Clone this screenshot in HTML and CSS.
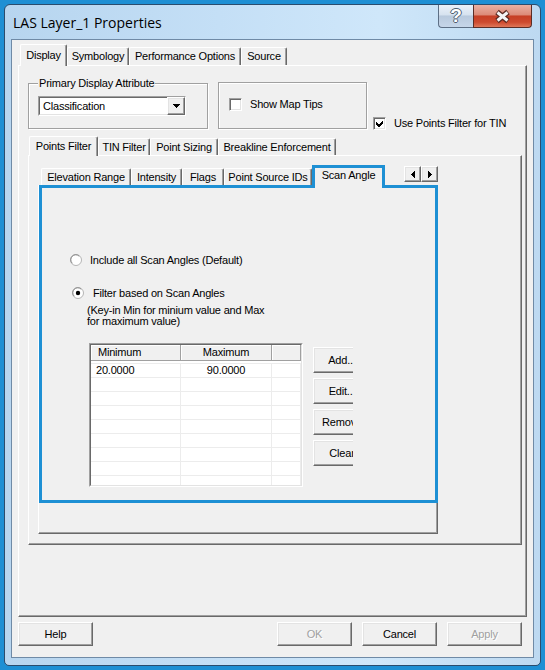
FILE: index.html
```html
<!DOCTYPE html>
<html>
<head>
<meta charset="utf-8">
<title>LAS Layer_1 Properties</title>
<link rel="stylesheet" href="styles.css">
</head>
<body>
<div class="window">
  <div class="titlebar">
    <div class="title">LAS Layer_1 Properties</div>
    <div class="caption">
      <div class="cap-help">?</div>
      <div class="cap-close">
        <svg width="17" height="15" viewBox="0 0 17 15">
          <path d="M3 3 L14 12 M14 3 L3 12" stroke="#5a2a22" stroke-width="5.5" fill="none"/>
          <path d="M3.5 3.5 L13.5 11.5 M13.5 3.5 L3.5 11.5" stroke="#f4f4f4" stroke-width="3" fill="none"/>
        </svg>
      </div>
    </div>
  </div>
  <div class="client">
    <div class="tabs main-tabs">
      <div class="tab sel w-display">Display</div>
      <div class="tab w-symb">Symbology</div>
      <div class="tab w-perf">Performance Options</div>
      <div class="tab w-src">Source</div>
    </div>
    <div class="panel main-panel">
      <div class="top-row">
        <div class="group group-attr">
          <div class="group-label">Primary Display Attribute</div>
          <div class="combo">
            <span class="combo-text">Classification</span>
            <span class="combo-btn">
              <svg width="7" height="4" viewBox="0 0 7 4" shape-rendering="crispEdges"><polygon points="0,0 7,0 3.5,4" fill="#000"/></svg>
            </span>
          </div>
        </div>
        <div class="group group-tips">
          <div class="check"><span class="box"></span>Show Map Tips</div>
        </div>
        <div class="check tin">
          <span class="box">
            <svg width="7" height="7" viewBox="0 0 7 7" shape-rendering="crispEdges"><path d="M0 2 L0 5 L2 7 L3 7 L7 3 L7 0 L2.5 4.5 Z" fill="#000"/></svg>
          </span>Use Points Filter for TIN
        </div>
      </div>

      <div class="pf">
        <div class="tabs pf-tabs">
          <div class="tab sel w-pf">Points Filter</div>
          <div class="tab w-tin">TIN Filter</div>
          <div class="tab w-ps">Point Sizing</div>
          <div class="tab w-be">Breakline Enforcement</div>
        </div>
        <div class="panel pf-panel">
          <div class="scan">
            <div class="tabs scan-tabs">
              <div class="tab w-er">Elevation Range</div>
              <div class="tab w-int">Intensity</div>
              <div class="tab w-fl">Flags</div>
              <div class="tab w-psi">Point Source IDs</div>
              <div class="tab scan-sel">Scan Angle</div>
              <div class="arrows">
                <div class="btn arr">
                  <svg width="4" height="7" viewBox="0 0 4 7" shape-rendering="crispEdges"><polygon points="4,0 4,7 0,3.5" fill="#000"/></svg>
                </div>
                <div class="btn arr">
                  <svg width="4" height="7" viewBox="0 0 4 7" shape-rendering="crispEdges"><polygon points="0,0 0,7 4,3.5" fill="#000"/></svg>
                </div>
              </div>
            </div>
            <div class="panel scan-panel">
              <div class="hl">
                <div class="radio-row">
                  <svg class="radio" width="12" height="12" viewBox="0 0 12 12">
                    <circle cx="6" cy="6" r="5.5" fill="#fff" stroke="#b4b4b4"/>
                    <path d="M2.2 9.2 A4.6 4.6 0 0 1 9.2 2.2" stroke="#8a8a8a" fill="none"/>
                  </svg>
                  <span>Include all Scan Angles (Default)</span>
                </div>
                <div class="radio-row r2">
                  <svg class="radio" width="12" height="12" viewBox="0 0 12 12">
                    <circle cx="6" cy="6" r="5.5" fill="#fff" stroke="#b4b4b4"/>
                    <path d="M2.2 9.2 A4.6 4.6 0 0 1 9.2 2.2" stroke="#8a8a8a" fill="none"/>
                    <circle cx="6" cy="6" r="2.2" fill="#000"/>
                  </svg>
                  <span>Filter based on Scan Angles</span>
                </div>
                <div class="note">(Key-in Min for minium value and Max<br>for maximum value)</div>
                <div class="list-row">
                  <div class="list">
                    <div class="list-inner">
                      <div class="lv-head">
                        <div class="lv-h c1">Minimum</div>
                        <div class="lv-h c2 center">Maximum</div>
                        <div class="lv-h c3"></div>
                      </div>
                      <div class="lv-body">
                        <div class="lv-r"><div class="lv-c c1">20.0000</div><div class="lv-c c2 center">90.0000</div><div class="lv-c c3"></div></div>
                        <div class="lv-r"><div class="lv-c c1"></div><div class="lv-c c2"></div><div class="lv-c c3"></div></div>
                        <div class="lv-r"><div class="lv-c c1"></div><div class="lv-c c2"></div><div class="lv-c c3"></div></div>
                        <div class="lv-r"><div class="lv-c c1"></div><div class="lv-c c2"></div><div class="lv-c c3"></div></div>
                        <div class="lv-r"><div class="lv-c c1"></div><div class="lv-c c2"></div><div class="lv-c c3"></div></div>
                        <div class="lv-r"><div class="lv-c c1"></div><div class="lv-c c2"></div><div class="lv-c c3"></div></div>
                        <div class="lv-r"><div class="lv-c c1"></div><div class="lv-c c2"></div><div class="lv-c c3"></div></div>
                        <div class="lv-r"><div class="lv-c c1"></div><div class="lv-c c2"></div><div class="lv-c c3"></div></div>
                        <div class="lv-r"><div class="lv-c c1"></div><div class="lv-c c2"></div><div class="lv-c c3"></div></div>
                      </div>
                    </div>
                  </div>
                  <div class="side">
                    <div class="btn sbtn">Add...</div>
                    <div class="btn sbtn">Edit...</div>
                    <div class="btn sbtn">Remove</div>
                    <div class="btn sbtn">Clear</div>
                  </div>
                </div>
              </div>
            </div>
          </div>
        </div>
      </div>
    </div>
    <div class="footer">
      <div class="btn fbtn">Help</div>
      <div class="btn fbtn ok disabled">OK</div>
      <div class="btn fbtn gap">Cancel</div>
      <div class="btn fbtn gap disabled">Apply</div>
    </div>
  </div>
</div>
</body>
</html>
```
FILE: styles.css
```css
* { box-sizing: border-box; }
html, body { margin: 0; padding: 0; }
body {
  width: 545px;
  height: 670px;
  overflow: hidden;
  padding: 4px 0 0 4px;
  background: #1e8fd4;
  font-family: "Liberation Sans", Arial, sans-serif;
  font-size: 11px;
  letter-spacing: -0.2px;
  color: #000;
}

/* window frame */
.window {
  width: 537px;
  height: 662px;
  border: 1px solid #2b4c6d;
  border-radius: 6px 6px 5px 5px;
  background: linear-gradient(to right, #b7d5ef 0%, #c4dff6 40%, #cfe7fa 70%, #bdd9f1 100%);
  padding: 0 6px 7px 6px;
  display: flex;
  flex-direction: column;
}
.titlebar {
  height: 34px;
  display: flex;
  align-items: flex-start;
  flex: none;
}
.title {
  font-family: "Open Sans", "Noto Sans", sans-serif;
  font-size: 14px;
  letter-spacing: 0;
  line-height: 18px;
  margin-top: 9px;
  padding-left: 2px;
  color: #000;
}
.caption {
  margin-left: auto;
  margin-right: 2px;
  display: flex;
  height: 23px;
}
.cap-help {
  width: 35px;
  height: 23px;
  border: 1px solid #5d6f85;
  border-top: none;
  border-right: none;
  border-radius: 0 0 0 4px;
  background: linear-gradient(#eaf1f9 0%, #d6e2ef 45%, #b8c9dd 50%, #c6d6e9 100%);
  color: #fff;
  font-family: "Liberation Sans", Arial, sans-serif;
  font-weight: bold;
  font-size: 19px;
  line-height: 22px;
  letter-spacing: 0;
  text-align: center;
  text-shadow: 1px 0 0 #4e5e70, -1px 0 0 #4e5e70, 0 1px 0 #4e5e70, 0 -1px 0 #4e5e70;
}
.cap-close {
  width: 59px;
  height: 23px;
  border: 1px solid #5b2d26;
  border-top: none;
  border-radius: 0 0 4px 0;
  background: linear-gradient(#eab0a2 0%, #dc8b78 45%, #c63f25 50%, #cd4a2f 78%, #df7658 100%);
  display: flex;
  align-items: center;
  justify-content: center;
}

/* client */
.client {
  height: 619px;
  flex: none;
  border: 1px solid #6f8aa6;
  background: #f0f0f0;
  padding: 4px 6px 0 6px;
}

/* tabs */
.tabs {
  display: flex;
  align-items: flex-end;
}
.tab {
  background: #f0f0f0;
  border-left: 1px solid #fff;
  border-top: 1px solid #fff;
  border-right: 1px solid #696969;
  box-shadow: inset -1px 0 0 #a0a0a0;
  border-radius: 2px 2px 0 0;
  text-align: center;
  white-space: nowrap;
  flex: none;
}
.tab.sel {
  position: relative;
  z-index: 1;
}

.main-tabs { height: 21px; padding-left: 2px; }
.main-tabs .tab { height: 18px; line-height: 17px; }
.main-tabs .tab.sel { height: 22px; margin-bottom: -1px; line-height: 20px; }
.w-display { width: 47px; }
.w-symb { width: 62px; }
.w-perf { width: 112px; }
.w-src { width: 46px; }

.panel {
  background: #f0f0f0;
  border-left: 1px solid #fff;
  border-top: 1px solid #fff;
  border-right: 1px solid #696969;
  border-bottom: 1px solid #696969;
  box-shadow: inset -1px -1px 0 #a0a0a0;
}
.main-panel {
  height: 552px;
  padding: 16px 0 0 9px;
}

/* top row */
.top-row {
  display: flex;
  align-items: flex-end;
}
.group {
  border: 1px solid #a0a0a0;
  box-shadow: inset 1px 1px 0 #fff, 1px 1px 0 #fff;
  flex: none;
}
.group-attr {
  width: 180px;
  padding: 0 0 12px 9px;
}
.group-label {
  margin-top: -7px;
  width: max-content;
  padding: 0 1px;
  line-height: 12px;
  background: #f0f0f0;
}
.group-tips {
  width: 149px;
  margin-left: 10px;
  padding: 15px 0 17px 10px;
}
.combo {
  margin-top: 7px;
  width: 148px;
  height: 20px;
  background: #fff;
  border: 1px solid;
  border-color: #a0a0a0 #fff #fff #a0a0a0;
  display: flex;
  align-items: stretch;
}
.combo-text {
  flex: 1;
  border: 1px solid;
  border-color: #696969 transparent transparent #696969;
  border-right: none;
  border-bottom: 1px solid #e3e3e3;
  padding-left: 3px;
  line-height: 16px;
}
.combo-btn {
  width: 18px;
  background: #f0f0f0;
  border: 1px solid;
  border-color: #fff #696969 #696969 #fff;
  box-shadow: inset -1px -1px 0 #a0a0a0, inset 1px 1px 0 #e3e3e3;
  display: flex;
  align-items: center;
  justify-content: center;
}

.check {
  display: flex;
  align-items: center;
  height: 13px;
  line-height: 13px;
  white-space: nowrap;
}
.box {
  width: 13px;
  height: 13px;
  flex: none;
  margin-right: 8px;
  background: #fff;
  border: 1px solid;
  border-color: #a0a0a0 #fff #fff #a0a0a0;
  box-shadow: inset 1px 1px 0 #696969, inset -1px -1px 0 #e3e3e3;
  display: flex;
  align-items: center;
  justify-content: center;
}
.tin {
  margin-left: 6px;
  margin-bottom: -1px;
}

/* points filter tabs */
.pf {
  margin-top: 7px;
  width: 494px;
}
.pf-tabs { height: 19px; padding-left: 1px; }
.pf-tabs .tab { height: 17px; line-height: 16px; }
.pf-tabs .tab.sel { height: 20px; margin-bottom: -1px; line-height: 18px; }
.w-pf { width: 69px; }
.w-tin { width: 52px; }
.w-ps { width: 68px; }
.w-be { width: 118px; }
.pf-panel {
  height: 390px;
  padding: 9px 0 0 9px;
}

/* scan angle tabs */
.scan { width: 400px; }
.scan-tabs { height: 20px; padding-left: 3px; }
.scan-tabs .tab { height: 17px; line-height: 16px; }
.w-er { width: 90px; }
.w-int { width: 51px; }
.w-fl { width: 42px; }
.w-psi { width: 88px; }
.scan-tabs .scan-sel {
  width: 73px;
  height: 23px;
  margin-bottom: -3px;
  border: 3px solid #1e90d4;
  border-bottom: none;
  border-radius: 0;
  box-shadow: none;
  line-height: 15px;
  position: relative;
  z-index: 1;
}
.arrows {
  margin-left: auto;
  align-self: flex-start;
  margin-top: 1px;
  display: flex;
}
.btn {
  background: #f0f0f0;
  border: 1px solid;
  border-color: #fff #696969 #696969 #fff;
  box-shadow: inset -1px -1px 0 #a0a0a0, inset 1px 1px 0 #e3e3e3;
  display: flex;
  align-items: center;
  justify-content: center;
  white-space: nowrap;
  flex: none;
}
.arr { width: 17px; height: 16px; }

.scan-panel { height: 349px; }
.hl {
  height: 318px;
  margin: -1px -1px 0 0;
  border: 3px solid #1e90d4;
  padding: 65px 0 0 28px;
}
.radio-row {
  display: flex;
  align-items: center;
  height: 13px;
  white-space: nowrap;
}
.radio { flex: none; margin-right: 8px; }
.r2 { margin-top: 20px; margin-left: 2px; }
.r2 .radio { margin-right: 9px; }
.note {
  margin: 6px 0 0 17px;
  line-height: 11px;
}
.list-row {
  display: flex;
  align-items: flex-start;
  margin: 16px 0 0 19px;
}
.list {
  width: 214px;
  height: 144px;
  flex: none;
  border: 1px solid;
  border-color: #a0a0a0 #fff #fff #a0a0a0;
}
.list-inner {
  height: 100%;
  border: 1px solid;
  border-color: #696969 #e3e3e3 #e3e3e3 #696969;
  background: #fff;
  overflow: hidden;
}
.lv-head { display: flex; height: 16px; }
.lv-h {
  background: #f0f0f0;
  border-right: 1px solid #a0a0a0;
  border-bottom: 1px solid #a0a0a0;
  box-shadow: inset 1px 1px 0 #fff;
  line-height: 15px;
  padding-left: 7px;
  white-space: nowrap;
}
.c1 { width: 90px; flex: none; }
.c2 { width: 91px; flex: none; }
.c3 { flex: 1; }
.lv-h.center { text-align: center; padding-left: 0; }
.lv-body { padding-top: 2px; }
.lv-r {
  display: flex;
  height: 14px;
  border-top: 1px solid #ececec;
}
.lv-c {
  border-right: 1px solid #ececec;
  line-height: 12px;
  padding-left: 5px;
  white-space: nowrap;
}
.lv-c.center { text-align: center; padding-left: 0; }
.side {
  width: 40px;
  flex: none;
  overflow: hidden;
  margin-left: 10px;
  padding-top: 4px;
}
.sbtn {
  width: 58px;
  height: 26px;
  margin-bottom: 5px;
}

/* footer */
.footer {
  display: flex;
  margin-top: 5px;
  padding-right: 5px;
}
.fbtn { width: 75px; height: 24px; }
.ok { margin-left: auto; }
.gap { margin-left: 10px; }
.disabled { color: #a0a0a0; text-shadow: 1px 1px 0 #fff; }
```
